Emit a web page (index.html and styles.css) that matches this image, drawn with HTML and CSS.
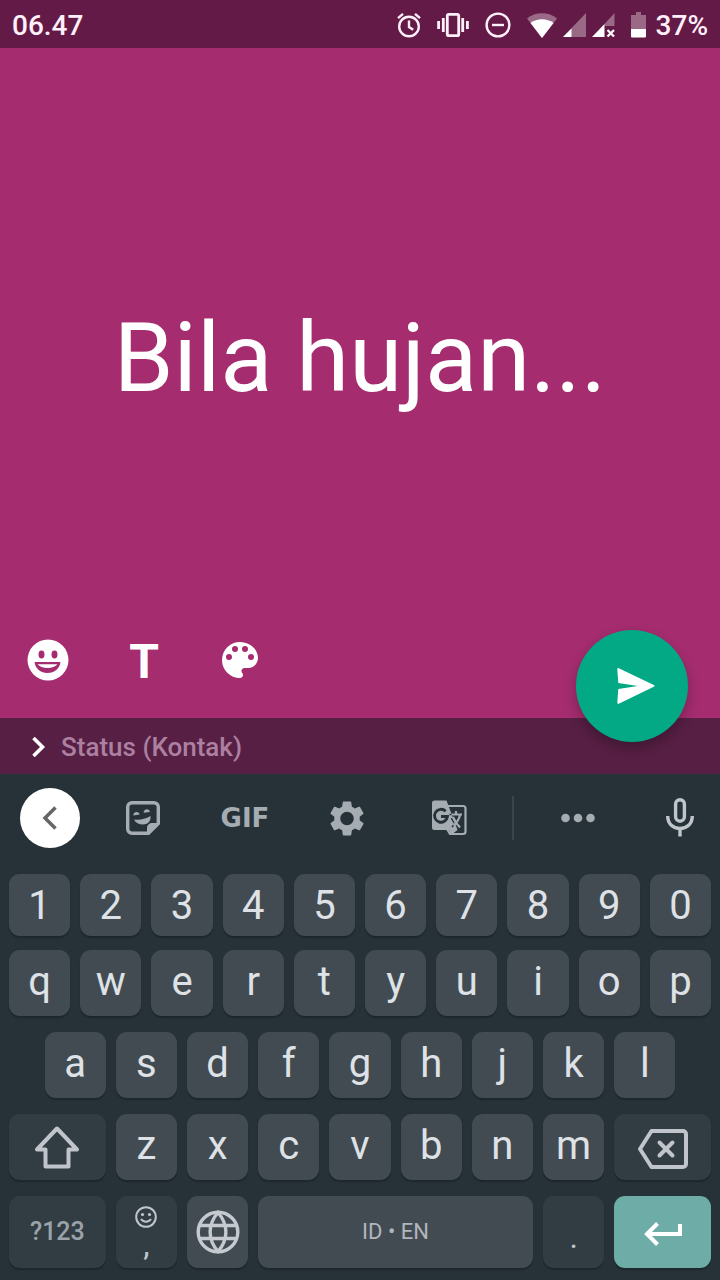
FILE: index.html
```html
<!DOCTYPE html>
<html lang="id">
<head>
<meta charset="utf-8">
<meta name="viewport" content="width=device-width, initial-scale=1">
<title>Status</title>
<link rel="stylesheet" href="styles.css">
</head>
<body>
<div class="screen">
  <header class="statusbar">
    <time class="clock">06.47</time>
    <div class="indicators">
      <div class="modes">
        <svg width="24" height="26" viewBox="0 0 24 26" fill="none" stroke="currentColor" stroke-width="2.4"><circle cx="12" cy="14.5" r="9.8"/><path d="M12 8.5v6.5l4.2 2.8M1 6.2 6 1.8M23 6.2 18 1.8"/></svg>
        <svg width="32" height="26" viewBox="0 0 32 26" fill="none" stroke="currentColor" stroke-width="2.8"><rect x="10.3" y="2.3" width="11.4" height="21.4" rx="1.5"/><path d="M6.3 6v14M1.6 9v8M25.7 6v14M30.4 9v8"/></svg>
        <svg width="26" height="26" viewBox="0 0 26 26" fill="none" stroke="currentColor" stroke-width="2.4"><circle cx="13" cy="13" r="11.4"/><path d="M7 13h12"/></svg>
      </div>
      <div class="radios">
        <svg width="30" height="25" viewBox="0 0 30 25" fill="#fff"><path opacity=".35" d="M0 5.5C8-1.5 22-1.5 30 5.5L15 25Z"/><path d="M3.5 10C10 5 20 5 26.500 10L15 25Z"/></svg>
        <svg width="23" height="24" viewBox="0 0 23 24" fill="#fff"><path opacity=".35" d="M0 24 23 0v24Z"/><path d="M0 24 8.500 15.500V24Z"/></svg>
        <svg width="23" height="24" viewBox="0 0 23 24" fill="#fff"><path opacity=".35" d="M12.500 11 22.500 0v13h-10Z"/><path d="M0 24 12.500 11v13Z"/><path fill="none" stroke="#fff" stroke-width="2.200" d="m15.500 17 6.500 6.500m0-6.500-6.500 6.500"/></svg>
      </div>
      <svg width="15" height="26" viewBox="0 0 15 26" fill="#fff"><path opacity=".35" d="M5 0h5v3h5v14H0V3h5Z"/><path d="M0 17h15v7.500a1 1 0 0 1-1 1H1a1 1 0 0 1-1-1Z"/></svg>
      <span class="charge">37%</span>
    </div>
  </header>

  <main class="composer">
    <div class="canvas">
      <input class="message" type="text" value="Bila hujan..." aria-label="Status" spellcheck="false">
    </div>
    <div class="tools">
      <button class="tool" type="button" aria-label="Emoji"><svg width="42" height="42" viewBox="0 0 42 42"><circle cx="21" cy="21" r="20.500" fill="#fff"/><g fill="#a42c6f"><ellipse cx="14.500" cy="15.500" rx="3" ry="4"/><ellipse cx="27.500" cy="15.500" rx="3" ry="4"/><path d="M7.500 23h26c-.8 6.500-6 11-13 11s-12.200-4.500-13-11Z"/></g><path fill="#fff" d="M10.500 25.300h20c-2 2.400-5.500 3.700-10 3.700s-8-1.300-10-3.700Z"/></svg></button>
      <button class="tool font-tool" type="button" aria-label="Font">T</button>
      <button class="tool" type="button" aria-label="Warna"><svg width="36" height="36" viewBox="3 3 18 18" fill="#fff"><path d="M12 3a9 9 0 0 0 0 18c.83 0 1.500-.67 1.500-1.500 0-.39-.15-.74-.39-1.010-.23-.26-.38-.61-.38-.99 0-.83.67-1.500 1.500-1.500H16c2.760 0 5-2.240 5-5 0-4.420-4.030-8-9-8Zm-5.500 9a1.500 1.500 0 1 1 0-3 1.500 1.500 0 0 1 0 3Zm3-4a1.500 1.500 0 1 1 0-3 1.500 1.500 0 0 1 0 3Zm5 0a1.500 1.500 0 1 1 0-3 1.500 1.500 0 0 1 0 3Zm3 4a1.500 1.500 0 1 1 0-3 1.500 1.500 0 0 1 0 3Z"/></svg></button>
    </div>
    <button class="send" type="button" aria-label="Kirim"><svg width="38" height="36" viewBox="0 0 38 36" fill="#fff"><path d="M1.800.2 36.800 16.900q1.600.9 0 1.800L1.800 35.800q-1.500.4-1.500-1.200L1.300 21l19.500-3-19.500-3L.3 1.400Q.3-.2 1.800.2Z"/></svg></button>
  </main>

  <button class="audience" type="button">
    <svg width="14" height="22" viewBox="0 0 14 22" fill="none" stroke="#fff" stroke-width="3.600"><path d="m1.500 2 9 9-9 9"/></svg>
    <span>Status (Kontak)</span>
  </button>

  <section class="keyboard" aria-label="Keyboard">
    <div class="suggest">
      <button class="back" type="button" aria-label="Kembali"><svg width="16" height="24" viewBox="0 0 16 24" fill="none" stroke="#666" stroke-width="3.500"><path d="M13.500 1.500 3 12l10.500 10.500"/></svg></button>
      <button type="button" aria-label="Stiker"><svg width="34" height="34" viewBox="0 0 34 34"><path fill="none" stroke="currentColor" stroke-width="3.400" stroke-linejoin="round" d="M6 1.700h22a4.300 4.300 0 0 1 4.300 4.300v16.500l-9.800 9.800H6A4.300 4.300 0 0 1 1.700 28V6A4.300 4.300 0 0 1 6 1.700Z"/><path fill="currentColor" d="M21 32.500V27a5 5 0 0 1 5-5h6.500ZM8 18.500c5 1 11-.2 16.500-3.500.7 5-3 8.500-7.500 8.500-4 0-7.500-1.800-9-5ZM7.300 14.500c0-2.300 1.500-3.600 3.200-3.600s2.900 1 3.100 2.600ZM17.600 11.800c.1-2.200 1.600-3.500 3.200-3.500s2.900 1 3.100 2.600Z"/></svg></button>
      <button class="gif" type="button">GIF</button>
      <button type="button" aria-label="Setelan"><svg width="34" height="35" viewBox="2 2 20 20" fill="currentColor"><path d="M19.430 12.980c.04-.32.07-.64.07-.98s-.03-.66-.07-.98l2.110-1.650c.19-.15.24-.42.12-.64l-2-3.460c-.12-.22-.39-.3-.61-.22l-2.490 1c-.52-.4-1.080-.73-1.690-.98l-.38-2.650A.49.49 0 0 0 14 2h-4c-.25 0-.46.18-.49.42l-.38 2.650c-.61.25-1.170.59-1.690.98l-2.490-1c-.23-.09-.49 0-.61.22l-2 3.460c-.13.22-.07.49.12.64l2.110 1.650c-.04.32-.07.65-.07.98s.03.66.07.98l-2.110 1.650c-.19.15-.24.42-.12.64l2 3.460c.12.22.39.3.61.22l2.490-1c.52.4 1.080.73 1.690.98l.38 2.650c.03.24.24.42.49.42h4c.25 0 .46-.18.49-.42l.38-2.650c.61-.25 1.170-.59 1.690-.98l2.490 1c.23.09.49 0 .61-.22l2-3.460c.12-.22.07-.49-.12-.64ZM12 16a4 4 0 1 1 0-8 4 4 0 0 1 0 8Z"/></svg></button>
      <button type="button" aria-label="Terjemahkan"><svg width="35" height="36" viewBox="0 0 35 36"><path fill="none" stroke="currentColor" stroke-width="2.200" d="M15 6h16a2.500 2.500 0 0 1 2.500 2.500v23a2.500 2.500 0 0 1-2.500 2.500H18L15 29"/><path fill="currentColor" d="M2.500.5h12L25.500 30 19 35l-2-5H2.500a2.500 2.500 0 0 1-2.500-2.500V3A2.500 2.500 0 0 1 2.500.5Z"/><path fill="none" stroke="#263238" stroke-width="2.800" d="M13.700 11.200A6.500 6.500 0 1 0 15.500 16.500H9"/><path fill="none" stroke="#263238" stroke-width="1.600" d="M17.500 14.500H20M19.500 18c.8 2 2 4 3.500 5.800L20 27"/><path fill="none" stroke="currentColor" stroke-width="2.200" d="M19.500 14.500h10.500M24 11v3.500M28 15c-1 4.500-3.500 8-6.500 10.500M21 17c1.500 4 4 7.500 7 10.500"/></svg></button>
      <span class="divider"></span>
      <button type="button" aria-label="Lainnya"><svg width="34" height="10" viewBox="0 0 34 10" fill="currentColor"><circle cx="4.500" cy="5" r="4.300"/><circle cx="17" cy="5" r="4.300"/><circle cx="29.500" cy="5" r="4.300"/></svg></button>
      <button class="mic" type="button" aria-label="Input suara"><svg width="28" height="40" viewBox="0 0 28 40" fill="none" stroke="currentColor" stroke-width="3.400"><rect x="9.600" y="1.700" width="8.800" height="21.500" rx="4.400"/><path d="M1.700 18c0 8 5.500 12.400 12.300 12.400S26.300 26 26.300 18M14 30v8.500"/></svg></button>
    </div>

    <div class="keys">
      <div class="row digits">
        <button class="key" type="button">1</button><button class="key" type="button">2</button><button class="key" type="button">3</button><button class="key" type="button">4</button><button class="key" type="button">5</button><button class="key" type="button">6</button><button class="key" type="button">7</button><button class="key" type="button">8</button><button class="key" type="button">9</button><button class="key" type="button">0</button>
      </div>
      <div class="row">
        <button class="key" type="button">q</button><button class="key" type="button">w</button><button class="key" type="button">e</button><button class="key" type="button">r</button><button class="key" type="button">t</button><button class="key" type="button">y</button><button class="key" type="button">u</button><button class="key" type="button">i</button><button class="key" type="button">o</button><button class="key" type="button">p</button>
      </div>
      <div class="row">
        <button class="key inset" type="button">a</button><button class="key" type="button">s</button><button class="key" type="button">d</button><button class="key" type="button">f</button><button class="key" type="button">g</button><button class="key" type="button">h</button><button class="key" type="button">j</button><button class="key" type="button">k</button><button class="key" type="button">l</button>
      </div>
      <div class="row">
        <button class="key dim wide" type="button" aria-label="Shift"><svg width="46" height="44" viewBox="0 0 46 44" fill="none" stroke="currentColor" stroke-width="4" stroke-linejoin="round"><path d="M23 3.500 43 24.500H34.500V41.500H11.500V24.500H3Z"/></svg></button>
        <button class="key" type="button">z</button><button class="key" type="button">x</button><button class="key" type="button">c</button><button class="key" type="button">v</button><button class="key" type="button">b</button><button class="key" type="button">n</button><button class="key" type="button">m</button>
        <button class="key dim wide backspace" type="button" aria-label="Hapus"><svg width="50" height="40" viewBox="0 0 50 40" fill="none" stroke="currentColor" stroke-width="4" stroke-linejoin="round"><path d="M13.500 2H45a3 3 0 0 1 3 3v30a3 3 0 0 1-3 3H13.500L2 20Z"/><path stroke-linecap="round" d="m21.500 13.500 13 13m0-13-13 13"/></svg></button>
      </div>
      <div class="row bottom">
        <button class="key dim wide symbols" type="button">?123</button>
        <button class="key dim comma" type="button" aria-label="Koma"><svg width="22" height="22" viewBox="0 0 22 22" fill="none" stroke="currentColor" stroke-width="2"><circle cx="11" cy="11" r="9.800"/><path d="M6 13c2 3.500 8 3.500 10 0"/><g fill="currentColor" stroke="none"><circle cx="7.500" cy="8.500" r="1.600"/><circle cx="14.500" cy="8.500" r="1.600"/></g></svg><span>,</span></button>
        <button class="key icon" type="button" aria-label="Bahasa"><svg width="44" height="44" viewBox="0 0 44 44" fill="none" stroke="currentColor" stroke-width="3.400"><circle cx="22" cy="22" r="19.800"/><path d="M22 2.500c-10.500 12-10.500 27 0 39 10.500-12 10.500-27 0-39ZM4 15.500h36M4 28.500h36"/></svg></button>
        <button class="key space" type="button">ID • EN</button>
        <button class="key dim period" type="button">.</button>
        <button class="key wide enter" type="button" aria-label="Enter"><svg width="38" height="24" viewBox="0 0 38 24" fill="none" stroke="#fff" stroke-width="4"><path d="M36 2v10H4M13.500 1.500 3 12l10.500 10.500"/></svg></button>
      </div>
    </div>
  </section>
</div>
</body>
</html>
```

FILE: styles.css
```css
* {
  box-sizing: border-box;
}

body {
  margin: 0;
  font-family: Roboto, "Liberation Sans", sans-serif;
  background: #263238;
}

button,
input {
  margin: 0;
  padding: 0;
  border: 0;
  background: none;
  color: inherit;
  font: inherit;
}

svg {
  display: block;
  flex: none;
}

.screen {
  display: flex;
  flex-direction: column;
  min-height: 100vh;
}

/* System status bar */
.statusbar {
  display: flex;
  align-items: center;
  justify-content: space-between;
  height: 48px;
  padding: 2px 12px 0;
  background: #641a46;
  color: #fff0f9;
  font-size: 28px;
  font-weight: 500;
}

.indicators,
.modes,
.radios {
  display: flex;
  align-items: center;
}

.indicators {
  gap: 16px;
}

.modes {
  gap: 16px;
}

.radios {
  gap: 6px;
}

.charge {
  margin-left: -6px;
}

/* Text status editor */
.composer {
  position: relative;
  display: flex;
  flex: 1;
  flex-direction: column;
  background: #a42c6f;
  color: #fff;
}

.canvas {
  display: flex;
  flex: 1;
  align-items: center;
  padding: 66px 32px 0;
}

.message {
  width: 100%;
  font-size: 96px;
  line-height: 112px;
  text-align: center;
  outline: 0;
}

.tools {
  display: flex;
  align-items: center;
  height: 116px;
}

.tool {
  display: grid;
  place-items: center;
  width: 96px;
  height: 96px;
}

.font-tool {
  padding-top: 2px;
  font-size: 48px;
  font-weight: 700;
}

.send {
  position: absolute;
  right: 32px;
  bottom: -24px;
  display: grid;
  place-items: center;
  width: 112px;
  height: 112px;
  padding-left: 8px;
  border-radius: 50%;
  background: #03a884;
  box-shadow: 0 6px 12px rgba(0, 0, 0, 0.25);
}

.audience {
  display: flex;
  align-items: center;
  gap: 15px;
  height: 56px;
  padding: 2px 32px 0;
  background: #571f44;
  color: #ac80a0;
  font-size: 26px;
  font-weight: 500;
}

/* Keyboard */
.keyboard {
  background: #263238;
  color: #bfc5cb;
}

.suggest {
  display: grid;
  grid-template-columns: 92fr 102fr 102fr 102fr 102fr 26fr 103fr 91fr;
  align-items: center;
  justify-items: center;
  height: 88px;
  color: #a5adb3;
}

.back {
  display: grid;
  place-items: center;
  justify-self: start;
  width: 60px;
  height: 60px;
  margin-left: 20px;
  border-radius: 50%;
  background: #fff;
}

.gif {
  font-family: "DejaVu Sans", sans-serif;
  font-size: 26px;
  font-weight: 700;
}

.divider {
  width: 2px;
  height: 44px;
  background: #3b464c;
}

.mic {
  justify-self: end;
  margin-right: 26px;
  color: #bfc5cb;
}

.keys {
  display: grid;
  gap: 16px;
  padding: 12px 9px;
}

.row {
  display: grid;
  grid-template-columns: repeat(20, minmax(0, 1fr));
  gap: 10px;
  height: 66px;
}

.digits {
  height: 62px;
  margin-bottom: -2px;
}

.bottom {
  height: 72px;
}

.key {
  display: flex;
  align-items: center;
  justify-content: center;
  grid-column: span 2;
  padding-bottom: 2px;
  border-radius: 11px;
  background: #434b52;
  box-shadow: 0 2px 1px #1d272c;
  color: #dee2e6;
  font-size: 40px;
  line-height: 48px;
}

.digits .key {
  padding: 2px 0 0;
}

.bottom .key {
  padding-bottom: 0;
}

.inset {
  grid-column: 2 / span 2;
}

.dim {
  background: #323d43;
  color: #bfc5cb;
}

.bottom .icon {
  color: #c5cad0;
}

.row .wide {
  grid-column: span 3;
  padding-bottom: 0;
}

.row .backspace {
  padding-top: 4px;
}

.symbols {
  color: #9ba3a9;
  font-size: 25px;
  font-weight: 500;
}

.comma {
  flex-direction: column;
  justify-content: space-between;
  font-size: 32px;
  line-height: 28px;
}

.bottom .comma {
  padding: 10px 0;
}

.space {
  grid-column: span 8;
  color: #b0b6bc;
  font-size: 22px;
}

.bottom .period {
  padding-top: 10px;
  font-size: 32px;
}

.enter {
  background: #6eaca7;
}

.row .enter {
  padding-top: 4px;
}
```
